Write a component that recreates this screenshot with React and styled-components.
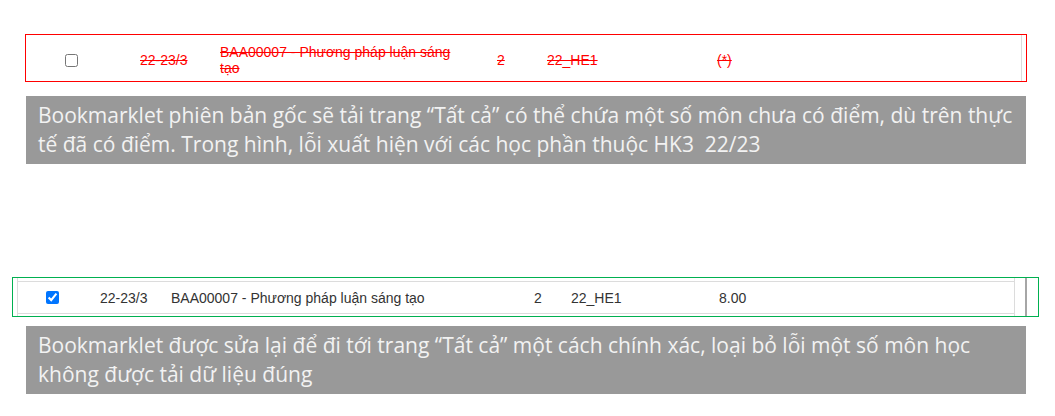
import React from 'react';
import styled, { createGlobalStyle } from 'styled-components';

const GlobalStyle = createGlobalStyle`
body {
  margin: 0;
  background: #fff;
}
`

const Page = styled.div`
display: flex;
flex-direction: column;
align-items: flex-start;
padding-top: 34px;
width: 1055px;
height: 416px;
box-sizing: border-box;
overflow: hidden;
`

const ErrorBox = styled.div`
display: flex;
margin-left: 25px;
width: 1002px;
height: 48px;
box-sizing: border-box;
border: 1px solid #ff0000;
padding-right: 4px;
background: #fff;
`

const FixedBox = styled.div`
display: flex;
margin-left: 12px;
margin-top: 113px;
width: 1027px;
height: 40px;
box-sizing: border-box;
border: 1px solid #00b050;
padding-left: 4px;
padding-right: 11px;
background: #fff;
`

const TableFrame = styled.div`
flex: 1;
display: flex;
flex-direction: column;
justify-content: flex-start;
border-left: 1px solid #dcdcdc;
border-right: 1px solid #dcdcdc;
padding-top: 3px;
`

const ScrollBar = styled.div`
width: 2px;
margin-left: 10px;
background: #a6a6a6;
`

const Row = styled.div`
flex: 1;
display: grid;
grid-template-columns: ${p => p.$cols};
align-items: center;
font-family: "Liberation Sans", Arial, sans-serif;
font-size: 14px;
color: ${p => (p.$struck ? '#ff0000' : '#333')};
text-decoration: ${p => (p.$struck ? 'line-through' : 'none')};
padding-top: ${p => (p.$struck ? '4px' : '0')};
border-right: ${p => (p.$struck ? '1px solid #dcdcdc' : 'none')};
border-top: ${p => (p.$struck ? 'none' : '1px solid #dcdcdc')};
border-bottom: ${p => (p.$struck ? 'none' : '1px solid #dcdcdc')};
${p => (p.$struck ? '' : 'flex: 0 0 31px;')}
`

const Cell = styled.div`
line-height: 16px;
max-width: ${p => p.$max || 'none'};
white-space: ${p => (p.$max ? 'normal' : 'nowrap')};
`

const CheckCell = styled.div`
display: flex;
align-items: center;
padding-left: ${p => p.$indent};
`

const Check = styled.input`
margin: 0;
width: 13px;
height: 13px;
`

const Caption = styled.div`
margin-left: 26px;
margin-top: ${p => p.$top};
width: 1000px;
height: 68px;
box-sizing: border-box;
padding: 5px 12px 0;
background: #999999;
color: #f2f2f2;
font-family: "Open Sans", "Noto Sans", sans-serif;
font-size: 21px;
line-height: 29px;
white-space: nowrap;
`

const App = () => {
  return (
    <Page>
      <GlobalStyle />
      <ErrorBox>
        <Row $struck $cols="114px 80px 277px 50px 170px 1fr">
          <CheckCell $indent="39px">
            <Check type="checkbox" readOnly />
          </CheckCell>
          <Cell>22-23/3</Cell>
          <Cell $max="242px">BAA00007 - Phương pháp luận sáng tạo</Cell>
          <Cell>2</Cell>
          <Cell>22_HE1</Cell>
          <Cell>(*)</Cell>
        </Row>
      </ErrorBox>
      <Caption $top="14px">
        Bookmarklet phiên bản gốc sẽ tải trang “Tất cả” có thể chứa một số môn chưa có điểm, dù trên thực
        <br />
        tế đã có điểm. Trong hình, lỗi xuất hiện với các học phần thuộc HK3&nbsp; 22/23
      </Caption>
      <FixedBox>
        <TableFrame>
          <Row $cols="28px 54px 71px 363px 37px 148px 1fr">
            <span />
            <CheckCell $indent="0px">
              <Check type="checkbox" checked readOnly />
            </CheckCell>
            <Cell>22-23/3</Cell>
            <Cell>BAA00007 - Phương pháp luận sáng tạo</Cell>
            <Cell>2</Cell>
            <Cell>22_HE1</Cell>
            <Cell>8.00</Cell>
          </Row>
        </TableFrame>
        <ScrollBar />
      </FixedBox>
      <Caption $top="9px">
        Bookmarklet được sửa lại để đi tới trang “Tất cả” một cách chính xác, loại bỏ lỗi một số môn học
        <br />
        không được tải dữ liệu đúng
      </Caption>
    </Page>
  );
};

export default App;
